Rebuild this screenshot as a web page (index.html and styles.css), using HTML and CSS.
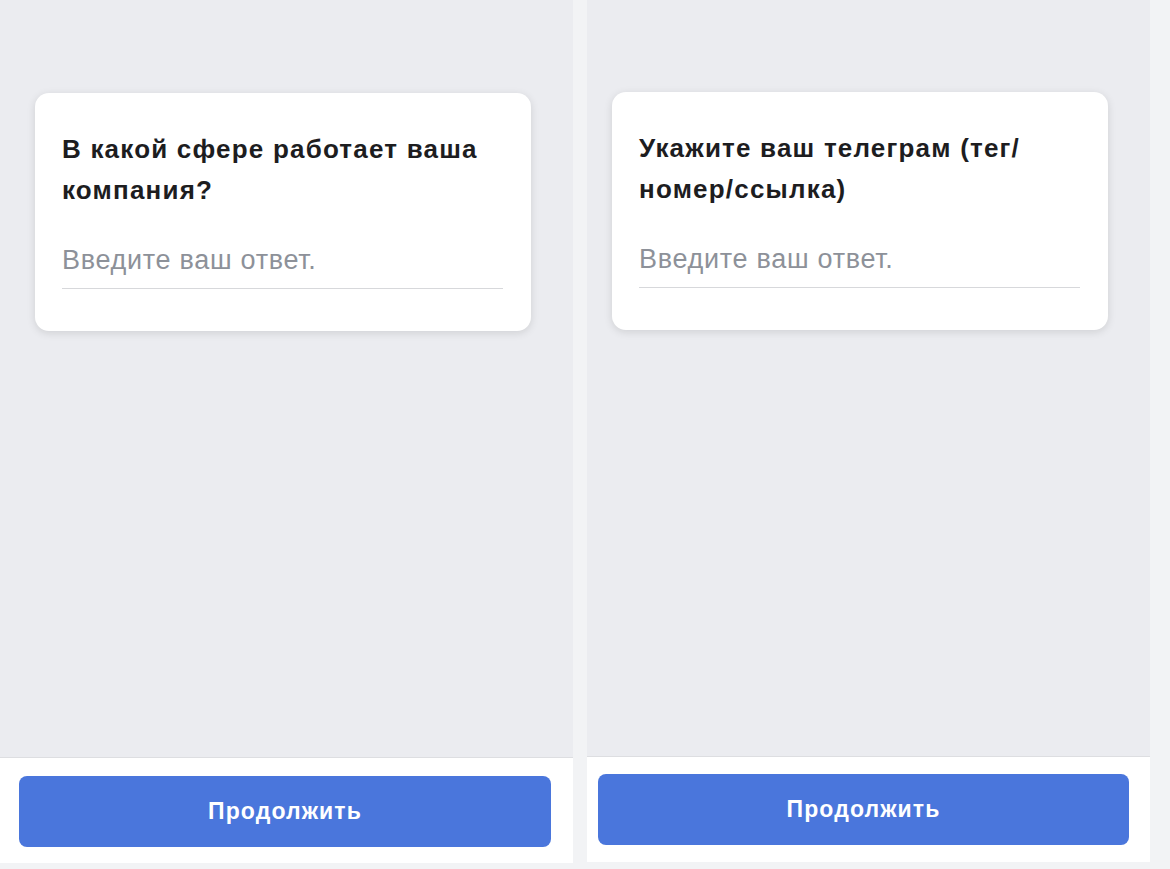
FILE: index.html
```html
<!DOCTYPE html>
<html lang="ru">
<head>
    <meta charset="UTF-8">
    <meta name="viewport" content="width=device-width, initial-scale=1.0">
    <title>Анкета</title>
    <link rel="stylesheet" href="styles.css">
</head>
<body>

<div class="screens">
    <section class="screen screen-left">
        <div class="screen-body">
            <div class="card">
                <h2 class="question">В какой сфере работает ваша компания?</h2>
                <input class="answer" type="text" placeholder="Введите ваш ответ.">
            </div>
        </div>
        <footer class="screen-footer">
            <button class="next" type="button">Продолжить</button>
        </footer>
    </section>

    <section class="screen screen-right">
        <div class="screen-body">
            <div class="card">
                <h2 class="question">Укажите ваш телеграм (тег/<wbr>номер/ссылка)</h2>
                <input class="answer" type="text" placeholder="Введите ваш ответ.">
            </div>
        </div>
        <footer class="screen-footer">
            <button class="next" type="button">Продолжить</button>
        </footer>
    </section>
</div>

</body>
</html>
```

FILE: styles.css
```css
body { margin: 0; padding: 0; background: #f2f3f5; font-family: "Liberation Sans", Arial, sans-serif; }
.screens { display: flex; gap: 14px; }
.screen { display: flex; flex-direction: column; background: #ebecf0; }
.screen-left { width: 573px; height: 863px; }
.screen-right { width: 563px; height: 862px; }
.screen-body { flex: 1; }
.screen-left .screen-body { padding: 93px 0 0 35px; }
.screen-right .screen-body { padding: 92px 0 0 25px; }

.card { width: 496px; box-sizing: border-box; padding: 36px 28px 42px 27px; background: #fff; border-radius: 14px; box-shadow: 0 2px 8px rgba(0, 0, 0, 0.12); }
.question { margin: 0 0 34px; font-size: 26px; line-height: 41px; font-weight: 700; letter-spacing: 1.2px; color: #1d1d1f; }
.answer { display: block; width: 100%; height: 44px; box-sizing: border-box; margin: 0; padding: 0 0 12px; border: 0; border-bottom: 1px solid #d7d8db; font-family: inherit; font-size: 27px; line-height: 31px; letter-spacing: 0.7px; color: #1d1d1f; background: transparent; outline: none; }
.answer::placeholder { color: #8d9199; }

.screen-footer { height: 106px; box-sizing: border-box; border-top: 1px solid #dddee1; background: #fff; }
.screen-left .screen-footer { padding: 18px 22px 0 19px; }
.screen-right .screen-footer { padding: 17px 21px 0 11px; }
.next { display: block; width: 100%; height: 71px; border: 0; border-radius: 8px; background: #4a76dc; color: #fff; font-family: inherit; font-size: 23px; font-weight: 700; letter-spacing: 1.1px; cursor: pointer; }
```
